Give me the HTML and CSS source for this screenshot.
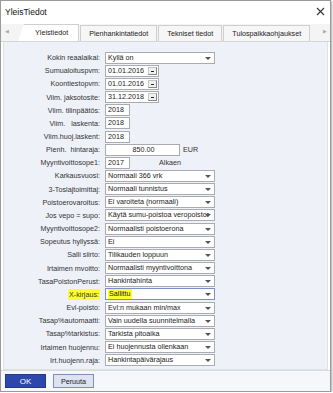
FILE: index.html
```
<!DOCTYPE html>
<html lang="fi">
<head>
    <meta charset="UTF-8">
    <title>YleisTiedot</title>
    <link rel="stylesheet" href="styles.css">
</head>
<body>
    <div class="window">
        <div class="titlebar">
            <span class="title">YleisTiedot</span>
            <svg class="close" width="9" height="9" viewBox="0 0 9 9">
                <path d="M1 1 L8 8 M8 1 L1 8" stroke="#333" stroke-width="1.1" fill="none"/>
            </svg>
        </div>

        <!-- tabs -->
        <div class="tabstrip">
            <span class="scroll">&#9664;</span>
            <div class="tab active">Yleistiedot</div>
            <div class="tab">Pienhankintatiedot</div>
            <div class="tab">Tekniset tiedot</div>
            <div class="tab">Tulospaikkaohjaukset</div>
            <span class="scroll right">&#9654;</span>
        </div>

        <div class="panel">
            <div class="form">
                <label>Kokin reaalaikai:</label>
                <div class="field"><div class="select">Kyllä on</div></div>

                <label>Sumualoituspvm:</label>
                <div class="field"><div class="date">01.01.2016<span class="datebtn"></span></div></div>

                <label>Koontiestopvm:</label>
                <div class="field"><div class="date">01.01.2016<span class="datebtn"></span></div></div>

                <label>Viim. jaksotosite:</label>
                <div class="field"><div class="date">31.12.2018<span class="datebtn"></span></div></div>

                <label>Viim. tilinpäätös:</label>
                <div class="field"><div class="text short">2018</div></div>

                <label>Viim.&nbsp;&nbsp;&nbsp;laskenta:</label>
                <div class="field"><div class="text short">2018</div></div>

                <label>Viim.huoj.laskent:</label>
                <div class="field"><div class="text short">2018</div></div>

                <label>Pienh.&nbsp;&nbsp;hintaraja:</label>
                <div class="field"><div class="text amount">850.00</div><span class="unit">EUR</span></div>

                <label>Myyntivoittosope1:</label>
                <div class="field"><div class="text short">2017</div><span class="after">Alkaen</span></div>

                <label>Karkausvuosi:</label>
                <div class="field"><div class="select">Normaali 366 vrk</div></div>

                <label>3-Toslajtoimittaj:</label>
                <div class="field"><div class="select">Normaali tunnistus</div></div>

                <label>Poistoerovaroitus:</label>
                <div class="field"><div class="select">Ei varoiteta (normaali)</div></div>

                <label>Jos vepo = supo:</label>
                <div class="field"><div class="select">Käytä sumu-poistoa veropoistor</div></div>

                <label>Myyntivoittosope2:</label>
                <div class="field"><div class="select">Normaalisti poistoerona</div></div>

                <label>Sopeutus hyllyssä:</label>
                <div class="field"><div class="select">Ei</div></div>

                <label>Salli siirto:</label>
                <div class="field"><div class="select">Tilikauden loppuun</div></div>

                <label>Irtaimen mvoitto:</label>
                <div class="field"><div class="select">Normaalisti myyntivoittona</div></div>

                <label>TasaPoistonPerust:</label>
                <div class="field"><div class="select">Hankintahinta</div></div>

                <label><span class="mark">X-kirjaus:</span></label>
                <div class="field"><div class="select focus"><span class="mark">Sallittu</span></div></div>

                <label>Evl-poisto:</label>
                <div class="field"><div class="select">Evl:n mukaan min/max</div></div>

                <label>Tasap%automaatti:</label>
                <div class="field"><div class="select">Vain uudella suunnitelmalla</div></div>

                <label>Tasap%tarkistus:</label>
                <div class="field"><div class="select">Tarkista pitoaika</div></div>

                <label>Irtaimen huojennu:</label>
                <div class="field"><div class="select">Ei huojennusta ollenkaan</div></div>

                <label>Irt.huojenn.raja:</label>
                <div class="field"><div class="select">Hankintapäivärajaus</div></div>
            </div>
        </div>

        <div class="footer">
            <button class="btn primary">OK</button>
            <button class="btn">Peruuta</button>
        </div>
    </div>
</body>
</html>
```

FILE: styles.css
```
body {
    margin: 0;
    background: #ffffff;
    font-family: "Liberation Sans", Arial, sans-serif;
    color: #222;
}

.window {
    width: 329px;
    height: 390px;
    border: 1px solid #9a9a9a;
    background: #ffffff;
    display: flex;
    flex-direction: column;
    box-shadow: 1px 1px 2px rgba(0, 0, 0, 0.35);
}

.titlebar {
    height: 21px;
    display: flex;
    align-items: center;
    justify-content: space-between;
    padding: 0 4px 0 4px;
}

.title {
    font-size: 8.5px;
    color: #111;
}

.close {
    margin-right: 1px;
}

.tabstrip {
    height: 17px;
    margin-top: 2px;
    display: flex;
    align-items: flex-end;
    background: #f4f4f4;
    border-bottom: 1px solid #d4d6dc;
    position: relative;
    padding-left: 17px;
}

.scroll {
    position: absolute;
    left: 4px;
    top: 4px;
    font-size: 5px;
    color: #aaa;
}

.scroll.right {
    left: auto;
    right: 3px;
}

.tab {
    height: 15px;
    line-height: 15px;
    font-size: 7.2px;
    color: #222;
    padding: 0 8px;
    background: #f6f6f6;
    border: 1px solid #cfcfcf;
    border-bottom: none;
    margin-right: 1px;
}

.tab.active {
    background: #ffffff;
    border-left: none;
    padding-left: 17px;
    padding-right: 10px;
    clip-path: polygon(6px 0, 100% 0, 100% 100%, 0 100%);
    height: 16px;
}

.panel {
    flex: 1;
    margin: 0 2px;
    background: #eef1f8;
    border: 1px solid #dde1ea;
    border-top: none;
    padding-top: 9px;
}

.form {
    display: grid;
    grid-template-columns: 96px 1fr;
    grid-auto-rows: 13.17px;
    column-gap: 5px;
    align-items: center;
}

label {
    text-align: right;
    font-size: 7.2px;
    color: #333;
    white-space: nowrap;
}

.field {
    display: flex;
    align-items: center;
    height: 12px;
}

.select,
.date,
.text {
    box-sizing: border-box;
    height: 12px;
    line-height: 10px;
    border: 1px solid #a9abb0;
    background: #fff;
    font-size: 7.2px;
    padding-left: 2px;
    white-space: nowrap;
    overflow: hidden;
    position: relative;
}

.select {
    width: 110px;
    padding-right: 12px;
}

.select::after {
    content: "";
    position: absolute;
    right: 3px;
    top: 4px;
    border-left: 3px solid transparent;
    border-right: 3px solid transparent;
    border-top: 3px solid #555;
}

.select.focus {
    border-color: #7a8fc7;
}

.date {
    width: 54px;
}

.datebtn {
    position: absolute;
    right: 1px;
    top: 1px;
    width: 9px;
    height: 8px;
    background: #f0f0f0;
    border: 1px solid #c4c4c4;
    border-right-color: #888;
    border-bottom-color: #888;
    box-sizing: border-box;
}

.datebtn::after {
    content: "";
    position: absolute;
    left: 2px;
    top: 3px;
    width: 3px;
    height: 1px;
    background: #222;
}

.text.short {
    width: 25px;
}

.text.amount {
    width: 75px;
    text-align: center;
}

.unit {
    font-size: 7.2px;
    margin-left: 3px;
    color: #333;
}

.after {
    font-size: 7.2px;
    margin-left: 29px;
    color: #333;
}

.mark {
    background: #ffff30;
    padding: 1px 1px;
}

.footer {
    height: 20px;
    border-top: 1px solid #d8dbe2;
    background: #f6f7fa;
    display: flex;
    align-items: center;
    gap: 7px;
    padding-left: 4px;
}

.btn {
    height: 14px;
    width: 41px;
    font-family: "Liberation Sans", Arial, sans-serif;
    font-size: 7.2px;
    border: 1px solid #7f8fb8;
    background: #dde3f1;
    color: #222;
    padding: 0;
    cursor: pointer;
}

.btn.primary {
    background: #2c48ab;
    border-color: #23398a;
    color: #fff;
    font-size: 8px;
}
```
